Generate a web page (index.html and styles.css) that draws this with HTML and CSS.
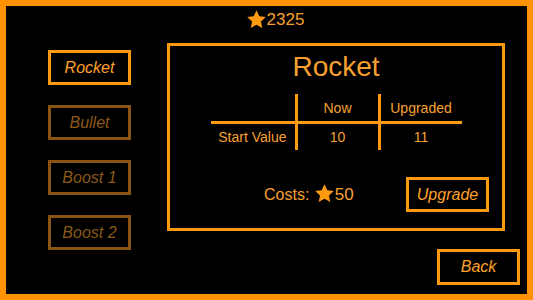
FILE: index.html
```html
<!DOCTYPE html>
<html>
<head>
<meta charset="utf-8">
<link rel="stylesheet" href="styles.css">
</head>
<body>
<div class="frame">
  <div class="header">
    <svg class="star star-top" viewBox="0 0 24 24"><polygon points="12,1.5 15.2,8.3 22.6,9.2 17.1,14.3 18.6,21.7 12,18 5.4,21.7 6.9,14.3 1.4,9.2 8.8,8.3"/></svg>
    <span class="count">2325</span>
  </div>
  <div class="main">
    <div class="sidebar">
      <div class="btn active">Rocket</div>
      <div class="btn disabled">Bullet</div>
      <div class="btn disabled">Boost 1</div>
      <div class="btn disabled">Boost 2</div>
    </div>
    <div class="panel">
      <div class="title">Rocket</div>
      <div class="table">
        <div class="cell head label"></div>
        <div class="cell head col">Now</div>
        <div class="cell head col">Upgraded</div>
        <div class="cell body label">Start Value</div>
        <div class="cell body col">10</div>
        <div class="cell body col">11</div>
      </div>
      <div class="cost-row">
        <div class="costs">Costs: <svg class="star star-cost" viewBox="0 0 24 24"><polygon points="12,1.5 15.2,8.3 22.6,9.2 17.1,14.3 18.6,21.7 12,18 5.4,21.7 6.9,14.3 1.4,9.2 8.8,8.3"/></svg><span>50</span></div>
        <div class="btn active">Upgrade</div>
      </div>
    </div>
  </div>
  <div class="footer">
    <div class="btn active">Back</div>
  </div>
</div>
</body>
</html>
```
FILE: styles.css
```css
html, body {
  margin: 0;
  padding: 0;
  background: #000;
}
body {
  font-family: "Liberation Sans", Arial, sans-serif;
  color: #f7a030;
}
.frame {
  width: 533px;
  height: 300px;
  box-sizing: border-box;
  border: 6px solid #ff9200;
  background: #000;
  display: flex;
  flex-direction: column;
}
.header {
  height: 37px;
  box-sizing: border-box;
  padding-top: 3px;
  padding-left: 17px;
  display: flex;
  justify-content: center;
  align-items: flex-start;
  line-height: 20px;
}
.star {
  fill: #ff9a10;
  display: block;
}
.star-top {
  width: 21px;
  height: 21px;
}
.count {
  font-size: 17px;
  line-height: 22px;
}
.main {
  display: flex;
  align-items: flex-start;
  height: 188px;
}
.sidebar {
  margin-left: 42px;
  padding-top: 7px;
  display: flex;
  flex-direction: column;
  gap: 20px;
}
.btn {
  width: 83px;
  height: 35px;
  box-sizing: border-box;
  border: 3px solid #ff9a10;
  display: flex;
  align-items: center;
  justify-content: center;
  font-style: italic;
  font-size: 16px;
  color: #ffa02a;
}
.btn.disabled {
  border-color: #8a5412;
  color: #8c5818;
}
.panel {
  margin-left: 36px;
  width: 338px;
  height: 188px;
  box-sizing: border-box;
  border: 3px solid #ff9a10;
  display: flex;
  flex-direction: column;
  align-items: center;
}
.title {
  padding-top: 5px;
  font-size: 28px;
  line-height: 32px;
  color: #f7a030;
}
.table {
  margin-top: 11px;
  display: grid;
  grid-template-columns: 84px 83px 84px;
  grid-template-rows: 30px 26px;
  font-size: 14px;
}
.cell {
  box-sizing: border-box;
  display: flex;
  align-items: center;
}
.cell.head {
  border-bottom: 3px solid #ff9a10;
}
.cell.col {
  border-left: 3px solid #ff9a10;
  justify-content: center;
}
.cell.label {
  justify-content: flex-end;
  padding-right: 8px;
}
.cost-row {
  align-self: stretch;
  margin-top: 27px;
  padding-left: 94px;
  padding-right: 13px;
  display: flex;
  justify-content: space-between;
  align-items: center;
}
.costs {
  display: flex;
  align-items: center;
  font-size: 16px;
  white-space: pre;
}
.costs span {
  font-size: 17px;
}
.star-cost {
  width: 21px;
  height: 21px;
  margin-left: 0px;
  margin-top: -2px;
}
.footer {
  margin-top: 18px;
  padding-right: 7px;
  display: flex;
  justify-content: flex-end;
}
.footer .btn {
  height: 36px;
}
```
